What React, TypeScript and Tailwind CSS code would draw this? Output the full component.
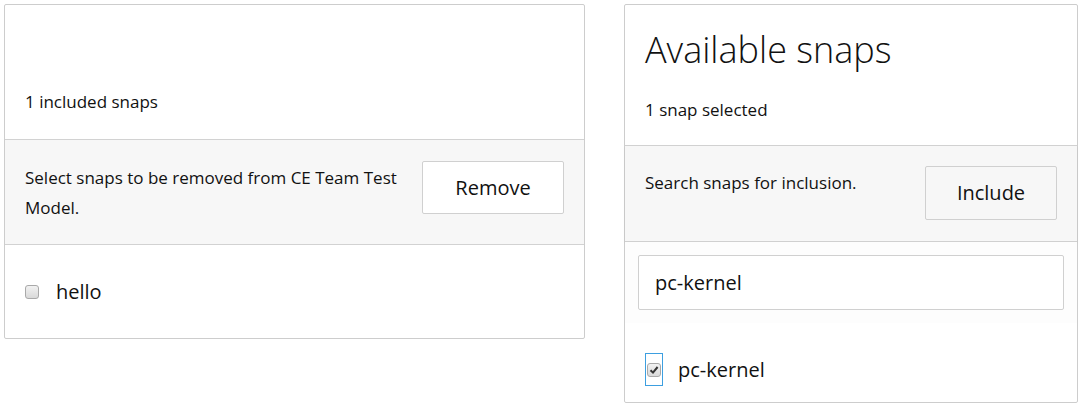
import React from 'react';

const font = { fontFamily: '"Open Sans", "Noto Sans", sans-serif' };

function Box({ checked }: { checked?: boolean }) {
  return (
    <span className="inline-flex h-[14px] w-[14px] items-center justify-center rounded-[3px] border border-[#a9a9a9] bg-gradient-to-b from-[#f2f2f2] to-[#d9d9d9]">
      {checked && (
        <svg width="10" height="10" viewBox="0 0 10 10">
          <path d="M1.5 5.2 L4 7.6 L8.6 2" fill="none" stroke="#333" strokeWidth="2" />
        </svg>
      )}
    </span>
  );
}

export default function App() {
  return (
    <div className="flex items-start gap-[39px] pl-[4px] pt-[4px] text-[#111]" style={font}>
      {/* Included snaps */}
      <div className="w-[581px] rounded-[2px] border border-[#cdcdcd] bg-white">
        <div className="flex h-[135px] items-end border-b border-[#d2d2d2] px-5 pb-[25px]">
          <p className="text-[17px] leading-6">1 included snaps</p>
        </div>
        <div className="flex items-start justify-between border-b border-[#d2d2d2] bg-[#f7f7f7] pl-5 pr-5 pt-[21px] pb-[21px]">
          <p className="mt-[2px] w-[390px] text-[17px] leading-[30px]">
            Select snaps to be removed from CE Team Test Model.
          </p>
          <button className="h-[53px] w-[142px] rounded-[2px] border border-[#d0d0d0] bg-white text-[20px]">
            Remove
          </button>
        </div>
        <div className="flex h-[93px] items-center gap-[17px] pl-[20px]">
          <Box />
          <span className="text-[20px]">hello</span>
        </div>
      </div>

      {/* Available snaps */}
      <div className="w-[454px] rounded-[2px] border border-[#cdcdcd] bg-white">
        <div className="border-b border-[#d2d2d2] px-5 pb-[23px] pt-[21px]">
          <h2 className="text-[36px] font-light leading-[48px]">Available snaps</h2>
          <p className="mt-[24px] text-[17px] leading-6">1 snap selected</p>
        </div>
        <div className="flex justify-between border-b border-[#d0d0d0] bg-[#f7f7f7] pl-5 pr-5 pt-[20px] pb-[21px] shadow-[0_1px_2px_rgba(0,0,0,0.06)]">
          <p className="mt-[2px] text-[17px] leading-[30px]">Search snaps for inclusion.</p>
          <button className="h-[54px] w-[132px] rounded-[2px] border border-[#d0d0d0] bg-[#f7f7f7] text-[20px]">
            Include
          </button>
        </div>
        <div className="bg-[#fdfdfd] p-[13px]">
          <div className="flex h-[55px] items-center rounded-[2px] border border-[#d0d0d0] bg-white px-4 text-[20px]">
            pc-kernel
          </div>
        </div>
        <div className="flex h-[79px] items-start gap-[15px] pl-[20px] pt-[30px]">
          <span className="flex h-[33px] w-[18px] items-center justify-center border border-[#3d9fe0]">
            <Box checked />
          </span>
          <span className="text-[20px] leading-[33px]">pc-kernel</span>
        </div>
      </div>
    </div>
  );
}
